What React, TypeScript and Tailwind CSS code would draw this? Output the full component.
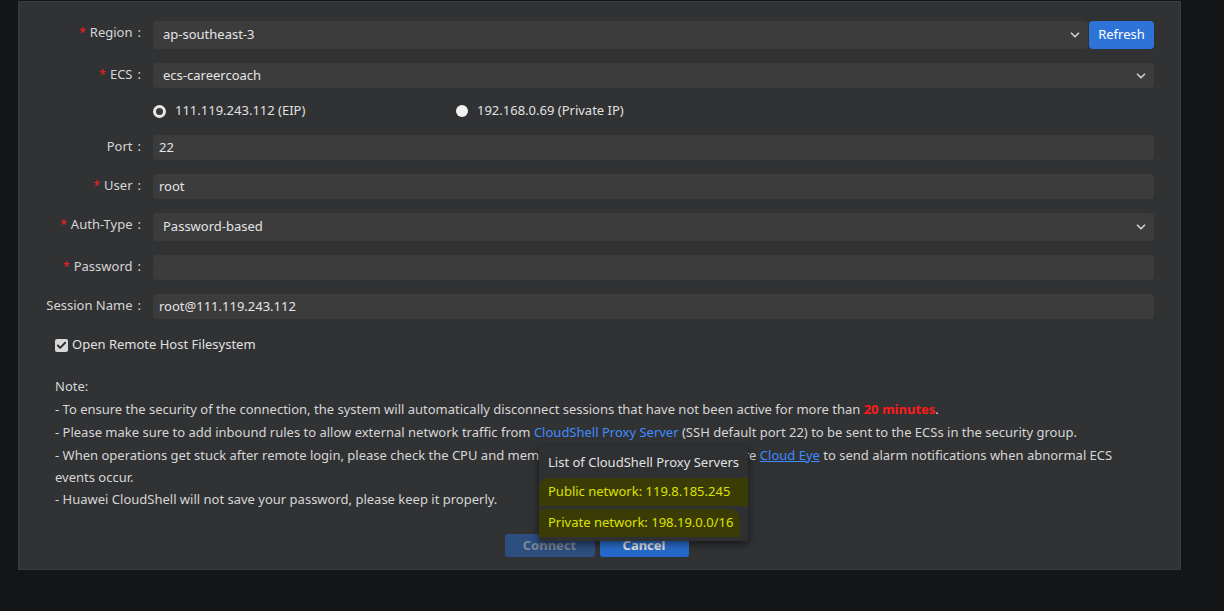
import { ChevronDown, Check } from 'lucide-react';

const font = { fontFamily: '"Noto Sans", "Open Sans", sans-serif' };

function Label({ text, required }: { text: string; required?: boolean }) {
  return (
    <div className="w-[122px] shrink-0 text-right text-[13px] leading-[22px] text-[#d6d6d6] mr-[12px] whitespace-nowrap">
      {required && <span className="text-[#f02020] mr-[4px] text-[12px]">*</span>}
      {text}
      <span className="ml-[5px]">:</span>
    </div>
  );
}

function Field({ value, select, h = 'h-[25px]' }: { value: string; select?: boolean; h?: string }) {
  return (
    <div className={`flex-1 ${h} rounded-[4px] bg-[#3c3c3d] flex items-center justify-between px-[6px] text-[13px] text-[#e4e4e4]`}>
      <span className={select ? 'pl-[4px]' : ''}>{value}</span>
      {select && <ChevronDown size={14} strokeWidth={3} className="text-[#cfcfcf]" />}
    </div>
  );
}

function Radio({ checked, label }: { checked?: boolean; label: string }) {
  return (
    <div className="flex items-center gap-[9px] text-[13px] text-[#e0e0e0]">
      <span
        className={
          checked
            ? 'w-[13px] h-[13px] rounded-full border-[3px] border-[#e8e8e8] bg-[#3a3a3a]'
            : 'w-[12px] h-[12px] rounded-full bg-[#f2f2f2]'
        }
      />
      {label}
    </div>
  );
}

export default function App() {
  return (
    <div className="w-[1224px] h-[611px] bg-[#141517] overflow-hidden" style={font}>
      <div className="ml-[18px] mt-[1px] w-[1163px] h-[569px] bg-[#313234] border border-[#3a3b3d] relative">
        <div className="pt-[19px] pr-[26px]">
          {/* Region */}
          <div className="flex items-start mb-[14px]">
            <Label text="Region" required />
            <div className="flex-1 flex gap-[1px]">
              <Field value="ap-southeast-3" select h="h-[28px]" />
              <button className="w-[65px] h-[28px] rounded-[4px] bg-[#2e74d8] text-white text-[13px]">Refresh</button>
            </div>
          </div>

          {/* ECS */}
          <div className="flex items-start mb-[15px]">
            <Label text="ECS" required />
            <Field value="ecs-careercoach" select />
          </div>

          <div className="flex items-center mb-[16px] pl-[134px] h-[16px]">
            <div className="w-[303px]">
              <Radio checked label="111.119.243.112 (EIP)" />
            </div>
            <Radio label="192.168.0.69 (Private IP)" />
          </div>

          <div className="flex items-start mb-[14px]">
            <Label text="Port" />
            <Field value="22" />
          </div>

          <div className="flex items-start mb-[14px]">
            <Label text="User" required />
            <Field value="root" />
          </div>

          <div className="flex items-start mb-[14px]">
            <Label text="Auth-Type" required />
            <Field value="Password-based" select h="h-[28px]" />
          </div>

          <div className="flex items-start mb-[14px]">
            <Label text="Password" required />
            <Field value="" />
          </div>

          <div className="flex items-start mb-[18px]">
            <Label text="Session Name" />
            <Field value="root@111.119.243.112" />
          </div>

          <div className="flex items-center h-[16px] gap-[4px] pl-[36px] text-[13px] text-[#e0e0e0]">
            <span className="w-[13px] h-[13px] rounded-[2px] bg-[#d8d8d8] flex items-center justify-center">
              <Check size={11} strokeWidth={4} className="text-[#2b2b2b]" />
            </span>
            Open Remote Host Filesystem
          </div>

          <div className="pl-[36px] mt-[21px] text-[13px] leading-[23px] text-[#d6d6d6]">
            <div className="leading-[24px]">Note:</div>
            <div>
              - To ensure the security of the connection, the system will automatically disconnect sessions that have not been active for more than{' '}
              <span className="text-[#ff1a1a] font-bold">20 minutes</span>.
            </div>
            <div>
              - Please make sure to add inbound rules to allow external network traffic from{' '}
              <span className="text-[#3f8cff]">CloudShell Proxy Server</span> (SSH default port 22) to be sent to the ECSs in the security group.
            </div>
            <div className="leading-[22px]">
              - When operations get stuck after remote login, please check the CPU and memory usage of the ECS, and configure{' '}
              <span className="text-[#3f8cff] underline">Cloud Eye</span> to send alarm notifications when abnormal ECS events occur.
            </div>
            <div className="leading-[22px]">- Huawei CloudShell will not save your password, please keep it properly.</div>
          </div>

          <div className="flex justify-center gap-[5px] mt-[24px] pl-[20px]">
            <button className="w-[90px] h-[23px] rounded-[3px] bg-[#2c4f80] text-[#7d8796] text-[13px] font-bold">Connect</button>
            <button className="w-[89px] h-[23px] rounded-[3px] bg-gradient-to-b from-[#2f76dc] to-[#2467c8] text-[#e6e6e6] text-[13px] font-bold">
              Cancel
            </button>
          </div>
        </div>

        {/* tooltip */}
        <div className="absolute left-[520px] top-[444px] w-[209px] h-[95px] bg-[#2f3032] shadow-[0_3px_8px_rgba(0,0,0,0.55)] px-[9px] pt-[5px] text-[13px] whitespace-nowrap">
          <div className="text-[#e2e2e2] leading-[22px]">List of CloudShell Proxy Servers</div>
          <div className="mt-[5px] -mx-[9px] px-[9px] h-[28px] flex items-center bg-[#3b3c05] text-[#dce200] rounded-tl-[10px]">
            Public network: 119.8.185.245
          </div>
          <div className="mt-[3px] -mx-[9px] px-[9px] h-[28px] flex items-center bg-[#3b3c05] text-[#dce200] w-[201px] rounded-tr-[10px]">
            Private network: 198.19.0.0/16
          </div>
        </div>
      </div>
    </div>
  );
}
